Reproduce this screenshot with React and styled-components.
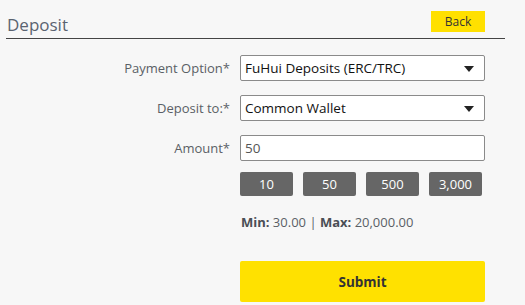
import React from 'react'
import styled, { createGlobalStyle } from 'styled-components'

const GlobalStyle = createGlobalStyle`
  html, body {
    margin: 0;
    padding: 0;
    background: #f7f7f7;
    font-family: "Open Sans", "Noto Sans", sans-serif;
  }
`

const Page = styled.div`
  width: 499px;
  margin-left: 6px;
`

const Header = styled.div`
  display: flex;
  justify-content: space-between;
  align-items: flex-end;
  height: 39px;
  border-bottom: 1px solid #444;
  box-sizing: border-box;
`

const Title = styled.h1`
  margin: 0 0 1px 1px;
  font-size: 17px;
  font-weight: 400;
  color: #5a6370;
  line-height: 24px;
`

const BackButton = styled.button`
  align-self: flex-start;
  margin: 11px 20px 0 0;
  width: 54px;
  height: 21px;
  border: none;
  background: #ffe000;
  color: #333;
  font-family: inherit;
  font-size: 12px;
  padding: 0;
`

const Form = styled.div`
  display: grid;
  grid-template-columns: 224px 245px;
  column-gap: 10px;
  row-gap: 14px;
  margin-top: 16px;
  align-items: center;
`

const Label = styled.label`
  text-align: right;
  font-size: 13px;
  color: #5a5f66;
`

const Field = styled.div`
  position: relative;
  height: 26px;
  box-sizing: border-box;
  border: 1px solid #8a8a8a;
  border-radius: 2px;
  background: #fff;
  display: flex;
  align-items: center;
  padding-left: 4px;
  font-size: 13.5px;
  color: ${p => (p.$muted ? '#555' : '#111')};
`

const Arrow = styled.span`
  position: absolute;
  right: 10px;
  top: 10px;
  width: 0;
  height: 0;
  border-left: 5px solid transparent;
  border-right: 5px solid transparent;
  border-top: 6px solid #222;
`

const Spacer = styled.div``

const Quick = styled.div`
  display: flex;
  gap: 10px;
  margin-top: -3px;
`

const QuickButton = styled.button`
  width: 53px;
  height: 24px;
  border: none;
  border-radius: 2px;
  background: #666;
  color: #fff;
  font-family: inherit;
  font-size: 13px;
  padding: 0;
`

const Limits = styled.div`
  margin-top: 3px;
  font-size: 13px;
  color: #5a5f66;
  padding-left: 1px;
  b { font-weight: 700; color: #4a4e55; }
`

const Submit = styled.button`
  margin-top: 16px;
  height: 41px;
  border: none;
  border-radius: 2px;
  background: #ffe100;
  color: #333;
  font-family: inherit;
  font-size: 13.5px;
  font-weight: 700;
`

export default function App() {
  return (
    <Page>
      <GlobalStyle />
      <Header>
        <Title>Deposit</Title>
        <BackButton>Back</BackButton>
      </Header>
      <Form>
        <Label>Payment Option*</Label>
        <Field>FuHui Deposits (ERC/TRC)<Arrow /></Field>
        <Label>Deposit to:*</Label>
        <Field>Common Wallet<Arrow /></Field>
        <Label>Amount*</Label>
        <Field $muted>50</Field>
        <Spacer />
        <Quick>
          {['10', '50', '500', '3,000'].map(v => (
            <QuickButton key={v}>{v}</QuickButton>
          ))}
        </Quick>
        <Spacer />
        <Limits><b>Min:</b> 30.00 | <b>Max:</b> 20,000.00</Limits>
        <Spacer />
        <Submit>Submit</Submit>
      </Form>
    </Page>
  )
}
